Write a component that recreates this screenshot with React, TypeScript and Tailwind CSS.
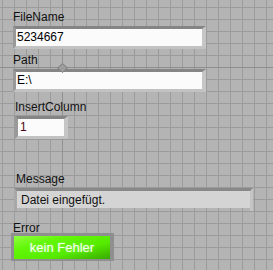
import React from "react";

const labelCls = "text-[12px] leading-[14px] text-[#111111] whitespace-nowrap";

function Field({ w, value, textCls = "text-black", inner = "bg-[#fbfbfb]" }: { w: string; value: string; textCls?: string; inner?: string }) {
  return (
    <div className={`${w} h-[23px] border-t-[3px] border-l-[3px] border-r-[4px] border-b-[3px] border-t-[#858585] border-l-[#999999] border-r-[#c6c6c6] border-b-[#c2c2c2] flex`}>
      <div className={`flex-1 ${inner} pl-[1px] text-[12px] leading-[17px] ${textCls} whitespace-nowrap overflow-hidden`}>{value}</div>
    </div>
  );
}

export default function App() {
  return (
    <div
      className="relative w-[273px] h-[270px] overflow-hidden bg-[#b4b4b4] bg-[linear-gradient(#919191,#919191),linear-gradient(#8e8e8e,#8e8e8e),linear-gradient(to_right,#9b9b9b_1px,transparent_1px),linear-gradient(to_bottom,#9b9b9b_1px,transparent_1px)] bg-[size:1px_100%,100%_1px,12px_12px,12px_12px] bg-[position:62px_0,0_67px,2px_7px,2px_7px] [background-repeat:no-repeat,no-repeat,repeat,repeat]"
      style={{ fontFamily: '"Liberation Sans", Arial, sans-serif' }}
    >
      <div className="flex flex-col pt-[10px]">
        <div className={`${labelCls} ml-[13px]`}>FileName</div>
        <div className="ml-[13px] mt-[2px]">
          <Field w="w-[193px]" value="5234667" />
        </div>
        <div className={`${labelCls} ml-[13px] mt-[4px]`}>Path</div>
        <div className="ml-[13px] mt-[2px]">
          <Field w="w-[193px]" value="E:\" />
        </div>
        <div className={`${labelCls} ml-[15px] mt-[8px]`}>InsertColumn</div>
        <div className="ml-[15px] mt-[2px]">
          <Field w="w-[53px]" value="1" textCls="text-[#4a0514] pl-[2px]" />
        </div>
        <div className={`${labelCls} ml-[16px] mt-[33px]`}>Message</div>
        <div className="ml-[14px] mt-[2px] w-[239px] h-[23px] border-t-[3px] border-l-[3px] border-r-[3px] border-t-[#888888] border-l-[#a8a8a8] border-r-[#c4c4c4] flex">
          <div className="flex-1 h-[17px] bg-[#d4d4d4] pl-[4px] pt-[1px] text-[12px] leading-[17px] text-[#111111] whitespace-nowrap">Datei eingefügt.</div>
        </div>
        <div className={`${labelCls} ml-[13px] mt-[10px]`}>Error</div>
        <div className="ml-[11px] mt-[-2px] w-[103px] h-[28px] border-[3px] border-[#8f8f8f] border-r-[4px] border-b-[2px] flex">
          <div className="flex-1 flex items-center justify-center bg-[linear-gradient(165deg,#90ff40_0%,#62f708_30%,#56ea00_65%,#38a800_100%)] text-[13px] leading-[14px] text-[#f2fff0] pt-[1px] [text-shadow:0_0_2px_rgba(255,255,255,0.5)]">
            kein Fehler
          </div>
        </div>
      </div>
      <svg className="absolute left-[57px] top-[63px]" width="11" height="10" viewBox="0 0 11 10">
        <polygon points="5.5,0.5 10.5,5 5.5,9.5 0.5,5" fill="#9c9c9c" stroke="#7c7c7c" strokeWidth="1" />
      </svg>
    </div>
  );
}
